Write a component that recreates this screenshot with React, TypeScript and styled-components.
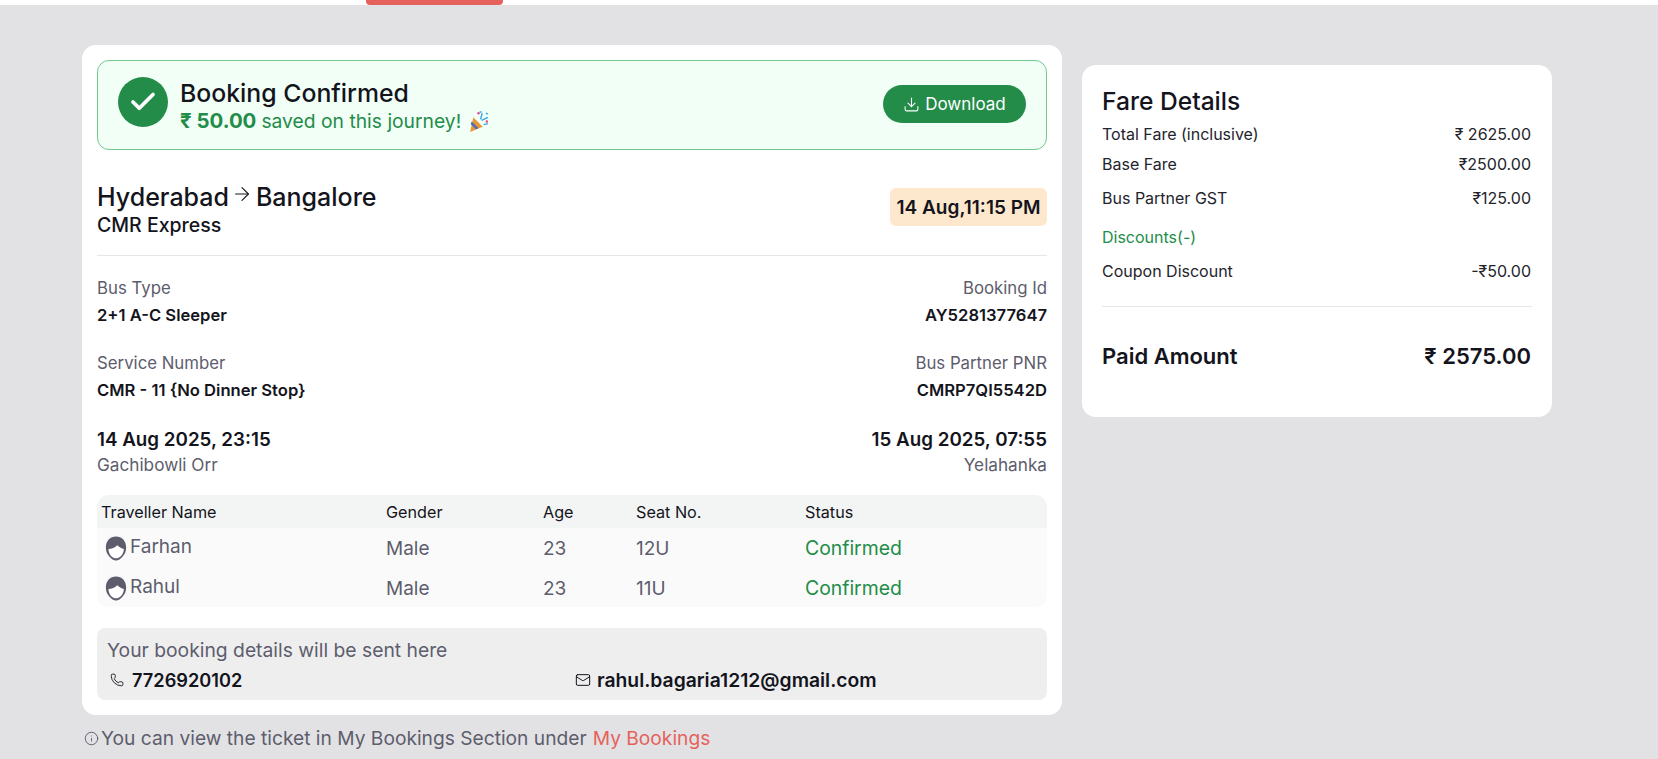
import styled, { createGlobalStyle } from "styled-components";
import { ArrowRight, Check, Download, Info, Mail, Phone } from "lucide-react";

const GlobalStyle = createGlobalStyle`
  html, body {
    margin: 0;
    height: 759px;
    overflow: hidden;
    background: #e2e2e4;
    font-family: Inter, "Noto Sans", sans-serif;
    color: #14141c;
  }
  * { box-sizing: border-box; }
`;

const TopBar = styled.div`
  height: 5px;
  background: #ffffff;
  padding-left: 366px;
`;

const TopTab = styled.div`
  width: 137px;
  height: 5px;
  background: #e5625c;
  border-radius: 0 0 4px 4px;
`;

const Layout = styled.div`
  display: flex;
  align-items: flex-start;
  gap: 20px;
  padding: 40px 0 0 82px;
`;

const LeftColumn = styled.div`
  width: 980px;
`;

const Card = styled.div`
  background: #ffffff;
  border-radius: 14px;
  padding: 15px 15px;
  height: 670px;
`;

const Banner = styled.div`
  height: 90px;
  display: flex;
  align-items: center;
  gap: 12px;
  padding: 0 20px;
  background: #f1fff7;
  border: 1px solid #72c98f;
  border-radius: 12px;
`;

const CheckCircle = styled.div`
  width: 50px;
  height: 50px;
  margin-bottom: 6px;
  border-radius: 50%;
  background: #238c49;
  color: #ffffff;
  display: flex;
  align-items: center;
  justify-content: center;
`;

const BannerText = styled.div`
  flex: 1;
  padding-top: 2px;
`;

const BannerTitle = styled.div`
  font-size: 24.8px;
  line-height: 30px;
  font-weight: 500;
`;

const BannerSub = styled.div`
  display: flex;
  align-items: center;
  font-size: 19.3px;
  line-height: 26px;
  color: #238c49;
  b {
    font-size: 20.400px;
    font-weight: 700;
    margin-right: 5px;
  }
  svg {
    margin-left: 6px;
  }
`;

const DownloadButton = styled.button`
  width: 143px;
  height: 38px;
  margin-bottom: 2px;
  display: flex;
  align-items: center;
  justify-content: center;
  gap: 5px;
  border: none;
  border-radius: 19px;
  background: #238c49;
  color: #ffffff;
  font-family: inherit;
  font-size: 17px;
  font-weight: 400;
`;

const RouteRow = styled.div`
  display: flex;
  justify-content: space-between;
  align-items: flex-start;
  padding: 32px 0 17px;
  border-bottom: 1px solid #e6e6e6;
`;

const RouteTitle = styled.div`
  display: flex;
  align-items: center;
  gap: 2px;
  font-size: 25px;
  line-height: 30px;
  font-weight: 500;
  svg {
    margin: 0 1px 7px 0;
  }
`;

const Operator = styled.div`
  font-size: 19.5px;
  line-height: 26px;
  font-weight: 500;
`;

const DateBadge = styled.div`
  margin-top: 6px;
  height: 38px;
  width: 157px;
  display: flex;
  align-items: center;
  justify-content: center;
  background: #fee8cd;
  border-radius: 6px;
  font-size: 19px;
  font-weight: 600;
  white-space: nowrap;
`;

const InfoRow = styled.div<{ $top: number }>`
  display: flex;
  justify-content: space-between;
  margin-top: ${(p) => p.$top}px;
`;

const InfoBlock = styled.div<{ $right?: boolean }>`
  text-align: ${(p) => (p.$right ? "right" : "left")};
`;

const Label = styled.div`
  font-size: 16.8px;
  line-height: 24px;
  color: #5d5d6d;
`;

const PlaceLabel = styled(Label)`
  font-size: 17.2px;
`;

const Value = styled.div`
  font-size: 16.6px;
  line-height: 24px;
  font-weight: 600;
  margin-top: 3px;
`;

const TimeValue = styled.div`
  font-size: 18.8px;
  line-height: 26px;
  font-weight: 600;
`;

const Table = styled.div`
  margin-top: 18px;
  height: 112px;
  border-radius: 12px;
  overflow: hidden;
  background: #fafafa;
`;

const TableRow = styled.div<{ $head?: boolean }>`
  display: grid;
  grid-template-columns: 285px 157px 93px 169px 1fr;
  align-items: center;
  height: ${(p) => (p.$head ? "33px" : "40px")};
  background: ${(p) => (p.$head ? "#f3f5f4" : "transparent")};
  font-size: ${(p) => (p.$head ? "16.200px" : "19px")};
  color: ${(p) => (p.$head ? "#14141c" : "#5d5d6d")};
  padding: ${(p) => (p.$head ? "1px 0 0 4px" : "2px 0 0 4px")};
  margin-bottom: ${(p) => (p.$head ? "-1px" : "0")};
`;

const NameCell = styled.div`
  display: flex;
  align-items: center;
  gap: 2px;
  padding-left: 3px;
`;

const NameText = styled.span`
  position: relative;
  top: -2px;
`;

const StatusCell = styled.div`
  color: #238c49;
  font-size: 19.400px;
`;

const ContactBox = styled.div`
  margin-top: 21px;
  height: 72px;
  padding: 9px 10px 0;
  background: #eeeeef;
  border-radius: 8px;
`;

const ContactTitle = styled.div`
  font-size: 19.3px;
  line-height: 26px;
  color: #5d5d6d;
`;

const ContactGrid = styled.div`
  display: grid;
  grid-template-columns: 1fr 1fr;
  margin-top: 4px;
`;

const ContactItem = styled.div<{ $gap: number; $size: number }>`
  display: flex;
  align-items: center;
  gap: ${(p) => p.$gap}px;
  padding-left: 3px;
  font-size: ${(p) => p.$size}px;
  line-height: 26px;
  font-weight: 600;
`;

const FooterNote = styled.div`
  display: flex;
  align-items: center;
  height: 24px;
  margin-top: 11px;
  padding-left: 2px;
  font-size: 19.200px;
  color: #5d5d6d;
  white-space: nowrap;
  svg {
    margin-right: 2px;
  }
`;

const FooterLink = styled.span`
  color: #e5625c;
  margin-left: 6px;
`;

const FareCard = styled.div`
  width: 470px;
  margin-top: 20px;
  height: 352px;
  padding: 21px 20px 20px;
  background: #ffffff;
  border-radius: 14px;
`;

const FareTitle = styled.div`
  font-size: 24.6px;
  line-height: 30px;
  font-weight: 500;
`;

const FareRow = styled.div<{ $top: number }>`
  display: flex;
  justify-content: space-between;
  margin-top: ${(p) => p.$top}px;
  padding-right: 1px;
  font-size: 16px;
  line-height: 22px;
  color: #24242c;
`;

const DiscountLabel = styled.div`
  margin-top: 17px;
  font-size: 16px;
  line-height: 22px;
  color: #238c49;
`;

const FareDivider = styled.div`
  height: 1px;
  margin-top: 24px;
  background: #e6e6e6;
`;

const PaidRow = styled.div`
  display: flex;
  justify-content: space-between;
  margin-top: 34px;
  padding-right: 1px;
  font-size: 22px;
  line-height: 30px;
  font-weight: 600;
`;

const Avatar = () => (
  <svg width="24" height="27" viewBox="0 0 26 28">
    <path
      d="M13 1C6.500 1 2 6 2 13c0 4 1.500 7.500 4 10 2 2.500 4.500 4 7 4s5-1.500 7-4c2.500-2.500 4-6 4-10C24 6 19.500 1 13 1Z"
      fill="#5d5d6d"
    />
    <path
      d="M4.800 14.500c3.700 0 7.200-1.500 9.700-4 1.500 2 4.500 3.500 7.100 4C21.300 20 17.500 24.600 13 24.600S5 20 4.800 14.500Z"
      fill="#ffffff"
    />
  </svg>
);

const Popper = () => (
  <svg width="23" height="23" viewBox="0 0 22 22">
    <path d="M6 7l9 9-12 5z" fill="#e8963a" />
    <path d="M4.500 11l6.500 6.500-2.500 1-5-5z" fill="#4a6fb5" />
    <circle cx="11" cy="3" r="1.200" fill="#e8489a" />
    <circle cx="19" cy="11" r="1.200" fill="#e8489a" />
    <path d="M13 9l1.500-6M14 10l6-3M12 2h2M18 3l2 1M16 14l4-1" stroke="#39a7e8" strokeWidth="1.400" fill="none" />
  </svg>
);

type Traveller = { name: string; seat: string };

const travellers: Traveller[] = [
  { name: "Farhan", seat: "12U" },
  { name: "Rahul", seat: "11U" },
];

const App = () => {
  return (
    <>
      <GlobalStyle />
      <TopBar>
        <TopTab />
      </TopBar>
      <Layout>
        <LeftColumn>
          <Card>
            <Banner>
              <CheckCircle>
                <Check size={30} strokeWidth={3} />
              </CheckCircle>
              <BannerText>
                <BannerTitle>Booking Confirmed</BannerTitle>
                <BannerSub>
                  <b>₹ 50.00</b> saved on this journey! <Popper />
                </BannerSub>
              </BannerText>
              <DownloadButton>
                <Download size={17} strokeWidth={1.5} />
                Download
              </DownloadButton>
            </Banner>

            <RouteRow>
              <div>
                <RouteTitle>
                  Hyderabad
                  <ArrowRight size={22} strokeWidth={1.2} />
                  Bangalore
                </RouteTitle>
                <Operator>CMR Express</Operator>
              </div>
              <DateBadge>14 Aug,11:15 PM</DateBadge>
            </RouteRow>

            <InfoRow $top={20}>
              <InfoBlock>
                <Label>Bus Type</Label>
                <Value>2+1 A-C Sleeper</Value>
              </InfoBlock>
              <InfoBlock $right>
                <Label>Booking Id</Label>
                <Value>AY5281377647</Value>
              </InfoBlock>
            </InfoRow>
            <InfoRow $top={24}>
              <InfoBlock>
                <Label>Service Number</Label>
                <Value>CMR - 11 {"{No Dinner Stop}"}</Value>
              </InfoBlock>
              <InfoBlock $right>
                <Label>Bus Partner PNR</Label>
                <Value>CMRP7QI5542D</Value>
              </InfoBlock>
            </InfoRow>
            <InfoRow $top={25}>
              <InfoBlock>
                <TimeValue>14 Aug 2025, 23:15</TimeValue>
                <PlaceLabel>Gachibowli Orr</PlaceLabel>
              </InfoBlock>
              <InfoBlock $right>
                <TimeValue>15 Aug 2025, 07:55</TimeValue>
                <PlaceLabel>Yelahanka</PlaceLabel>
              </InfoBlock>
            </InfoRow>

            <Table>
              <TableRow $head>
                <div>Traveller Name</div>
                <div>Gender</div>
                <div>Age</div>
                <div>Seat No.</div>
                <div>Status</div>
              </TableRow>
              {travellers.map((t) => (
                <TableRow key={t.name}>
                  <NameCell>
                    <Avatar />
                    <NameText>{t.name}</NameText>
                  </NameCell>
                  <div>Male</div>
                  <div>23</div>
                  <div>{t.seat}</div>
                  <StatusCell>Confirmed</StatusCell>
                </TableRow>
              ))}
            </Table>

            <ContactBox>
              <ContactTitle>Your booking details will be sent here</ContactTitle>
              <ContactGrid>
                <ContactItem $gap={8} $size={18.2}>
                  <Phone size={14} strokeWidth={1.5} />
                  7726920102
                </ContactItem>
                <ContactItem $gap={6} $size={19.3}>
                  <Mail size={16} strokeWidth={1.5} />
                  rahul.bagaria1212@gmail.com
                </ContactItem>
              </ContactGrid>
            </ContactBox>
          </Card>
          <FooterNote>
            <Info size={15} strokeWidth={1.5} />
            You can view the ticket in My Bookings Section under
            <FooterLink>My Bookings</FooterLink>
          </FooterNote>
        </LeftColumn>

        <FareCard>
          <FareTitle>Fare Details</FareTitle>
          <FareRow $top={7}>
            <span>Total Fare (inclusive)</span>
            <span>₹ 2625.00</span>
          </FareRow>
          <FareRow $top={8}>
            <span>Base Fare</span>
            <span>₹2500.00</span>
          </FareRow>
          <FareRow $top={12}>
            <span>Bus Partner GST</span>
            <span>₹125.00</span>
          </FareRow>
          <DiscountLabel>Discounts(-)</DiscountLabel>
          <FareRow $top={12}>
            <span>Coupon Discount</span>
            <span>-₹50.00</span>
          </FareRow>
          <FareDivider />
          <PaidRow>
            <span>Paid Amount</span>
            <span>₹ 2575.00</span>
          </PaidRow>
        </FareCard>
      </Layout>
    </>
  );
};

export default App;
